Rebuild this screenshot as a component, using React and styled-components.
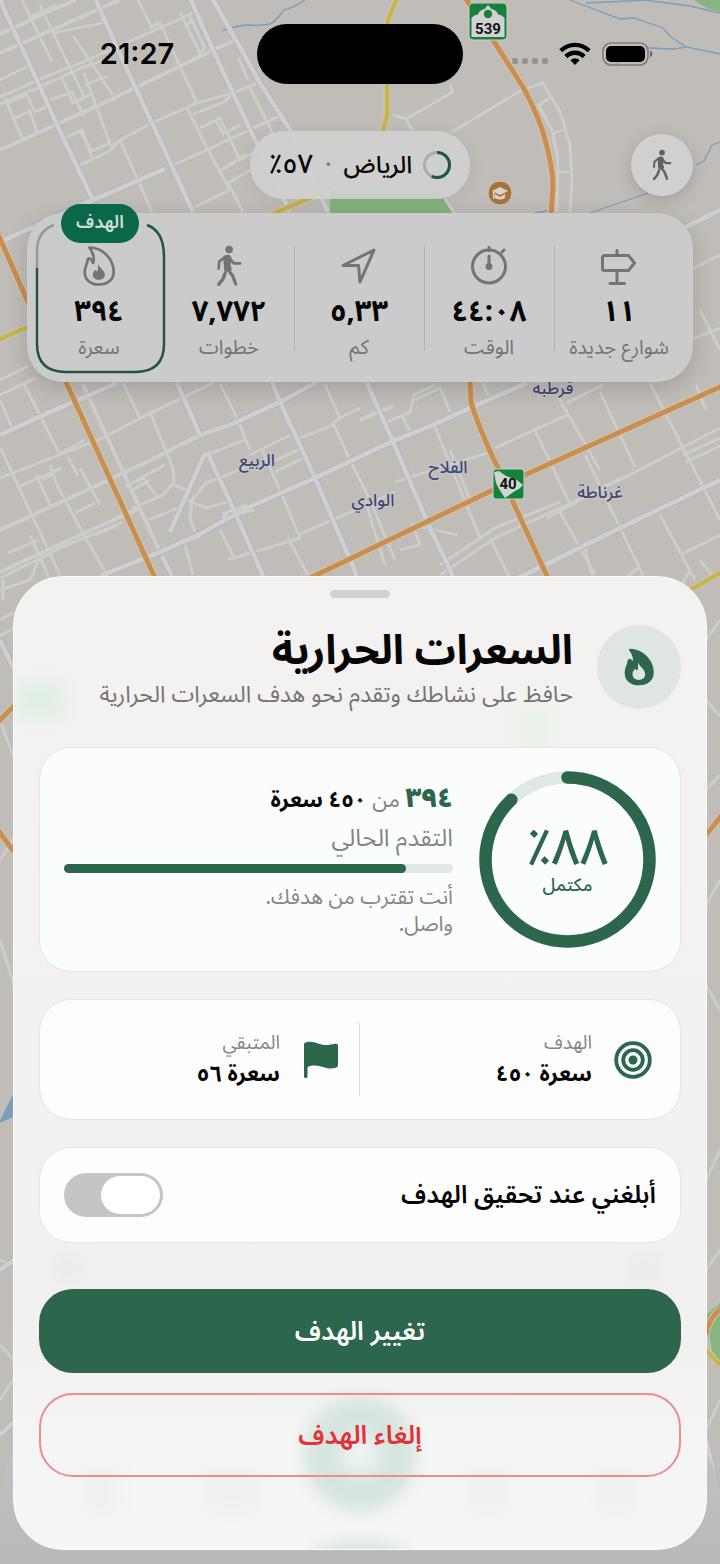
//style
import styled, { createGlobalStyle, css } from "styled-components";

const GlobalStyle = createGlobalStyle`
  * {
    box-sizing: border-box;
  }

  body {
    margin: 0;
    background: #c0bcb7;
    font-family: "Noto Sans Arabic", "Noto Sans", "DejaVu Sans", sans-serif;
  }

  h1,
  p,
  dl,
  dt,
  dd {
    margin: 0;
  }
`;

const green = "#2c674d";

//page
const Page = styled.main`
  position: relative;
  overflow: hidden;
  min-height: 100vh;
  padding-bottom: 13px;
  color: #050505;
`;

const MapCanvas = styled.svg`
  position: absolute;
  inset: 0;
  width: 100%;
  height: 100%;
`;

const Shade = styled.div`
  position: absolute;
  inset: auto 0 0;
  height: 142px;
  border-radius: 76px 76px 0 0;
  background: linear-gradient(#c3c3c3, #b9b9b9);
`;

//status bar
const StatusBar = styled.header`
  position: relative;
  direction: ltr;
  display: grid;
  grid-template-columns: 1fr 206px 1fr;
  align-items: center;
  padding-top: 23px;
`;

const Time = styled.time`
  padding-left: 17px;
  text-align: center;
  font: 600 29px/62px Inter, sans-serif;
`;

const Island = styled.div`
  height: 60px;
  border-radius: 30px;
  background: #000;
`;

const Signals = styled.div`
  display: flex;
  align-items: center;
  justify-content: center;
  gap: 11px;
  padding-right: 18px;
`;

//top row
const TopRow = styled.div`
  position: relative;
  display: grid;
  grid-template-columns: 1fr auto 1fr;
  align-items: center;
  margin-top: 46px;
  padding: 0 27px;
`;

const CityPill = styled.div`
  grid-column: 2;
  display: flex;
  align-items: center;
  gap: 11px;
  height: 68px;
  padding: 0 19px;
  border-radius: 34px;
  background: rgba(208, 208, 208, 0.92);
  box-shadow: 0 4px 20px rgba(0, 0, 0, 0.06);
  font-size: 24px;
  font-weight: 500;
  line-height: 36px;
`;

const Dot = styled.span`
  margin: 0 12px;
  color: #777;
`;

const Percent = styled.span`
  font-size: 27px;
`;

const RoundButton = styled.button`
  display: grid;
  place-items: center;
  width: 62px;
  height: 62px;
  padding: 0;
  border: 0;
  border-radius: 50%;
  background: #d0d0d0;
  color: #626262;
  box-shadow: 0 4px 16px rgba(0, 0, 0, 0.16);
`;

//stats
const StatsCard = styled.section`
  position: relative;
  display: grid;
  grid-template-columns: repeat(5, 1fr);
  margin: 14px 27px 0;
  padding: 10px 9px 9px 7px;
  border-radius: 36px;
  background: #cbcbcb;
  box-shadow: 0 6px 22px rgba(0, 0, 0, 0.16);
`;

const StatCell = styled.div`
  position: relative;
  display: flex;
  flex-direction: column;
  align-items: center;
  height: 150px;
  padding-top: 22px;
  color: #747474;

  ${({ $divided }) =>
    $divided &&
    css`
      &::after {
        content: "";
        position: absolute;
        left: 0;
        top: 23px;
        bottom: 22px;
        width: 1px;
        background: #b3b3b3;
      }
    `}
`;

const StatValue = styled.strong`
  color: #050505;
  font-size: 29px;
  font-weight: 700;
  line-height: 50px;
`;

const StatLabel = styled.span`
  font-size: 20px;
  line-height: 22px;
  white-space: nowrap;
`;

const GoalFrame = styled.svg`
  position: absolute;
  inset: 0;
  width: 100%;
  height: 100%;
  overflow: visible;
`;

const GoalBadge = styled.span`
  position: absolute;
  top: -19px;
  left: 50%;
  width: 78px;
  height: 39px;
  margin-left: -38px;
  border-radius: 20px;
  background: #086849;
  color: #d3dcd8;
  text-align: center;
  font-size: 18px;
  font-weight: 600;
  line-height: 36px;
`;

//sheet
const Sheet = styled.section`
  position: relative;
  overflow: hidden;
  display: flex;
  flex-direction: column;
  margin: 194px 13px 0;
  padding: 13px 25px 72px;
  border: 1px solid #fcfcfc;
  border-radius: 50px;
  background: linear-gradient(#f3f2f0, #f2f1f0 80%, #f5f5f5 90%);
`;

const Glow = styled.i`
  position: absolute;
  left: ${({ $left }) => $left};
  top: ${({ $top }) => $top}px;
  width: ${({ $size }) => $size}px;
  height: ${({ $tall, $size }) => $tall || $size}px;
  border-radius: ${({ $round }) => ($round ? "50%" : "4px")};
  background: ${({ $tint }) => $tint};
  filter: blur(8px);
`;

const Handle = styled.div`
  align-self: center;
  width: 60px;
  height: 8px;
  border-radius: 4px;
  background: #d3d2d1;
`;

const SheetHeader = styled.div`
  position: relative;
  display: flex;
  align-items: flex-start;
  gap: 24px;
  margin-top: 27px;
`;

const HeaderIcon = styled.div`
  flex: none;
  display: grid;
  place-items: center;
  width: 84px;
  height: 84px;
  border-radius: 50%;
  background: #dfe5e2;
  color: ${green};
`;

const Title = styled.h1`
  font-size: 41px;
  font-weight: 700;
  line-height: 52px;
`;

const Subtitle = styled.p`
  color: #747474;
  font-size: 23px;
  line-height: 36px;
  white-space: nowrap;
`;

const Card = styled.div`
  position: relative;
  display: flex;
  align-items: center;
  margin-top: ${({ $gap }) => $gap || 27}px;
  padding: 23px 24px;
  border: 1px solid #dfe8e4;
  border-radius: 32px;
  background: ${({ $mint }) => ($mint ? "#fafdfb" : "#fdfdfd")};
`;

const RingBox = styled.div`
  position: relative;
  flex: none;
  display: grid;
  place-content: center;
  width: 177px;
  height: 177px;
  margin-inline-end: 26px;
  color: ${green};
  text-align: center;
`;

const RingSvg = styled.svg`
  position: absolute;
  inset: 0;
`;

const RingValue = styled.strong`
  font-size: 50px;
  font-weight: 500;
  line-height: 50px;
`;

const RingLabel = styled.span`
  font-size: 18px;
  font-weight: 500;
  line-height: 24px;
`;

const Progress = styled.div`
  flex: 1;
  padding-bottom: 4px;
`;

const Amount = styled.p`
  font-size: 22px;
  font-weight: 700;
  line-height: 44px;

  b {
    color: ${green};
    font-size: 27px;
  }

  span {
    color: #858585;
    font-weight: 400;
  }
`;

const Muted = styled.p`
  color: #858585;
  font-size: 24px;
  line-height: 34px;
`;

const Message = styled.p`
  max-width: 220px;
  color: #858585;
  font-size: 21px;
  line-height: 27px;
`;

const Track = styled.div`
  direction: ltr;
  height: 9px;
  margin: 8px 0 11px;
  border-radius: 5px;
  background: #dfe8e4;
`;

const Fill = styled.div`
  height: 100%;
  border-radius: 5px;
  background: ${green};
`;

const Facts = styled.dl`
  flex: 1;
  display: grid;
  grid-template-columns: 1fr 1fr;
`;

const Fact = styled.div`
  display: grid;
  grid-template-columns: 46px 1fr;
  column-gap: 18px;
  align-content: center;
  height: 73px;
  color: ${green};

  & + & {
    padding-inline-start: 15px;
    border-inline-start: 1px solid #dcdcdc;
  }

  svg {
    grid-row: span 2;
    place-self: center;
  }

  dt {
    color: #858585;
    font-size: 19px;
    line-height: 28px;
  }

  dd {
    color: #050505;
    font-size: 22px;
    font-weight: 700;
    line-height: 34px;
  }
`;

const SwitchRow = styled.label`
  flex: 1;
  display: flex;
  align-items: center;
  justify-content: space-between;
  height: 48px;
  font-size: 25px;
  font-weight: 600;
`;

const Switch = styled.input`
  appearance: none;
  width: 99px;
  height: 44px;
  margin: 0;
  padding: 3px;
  border-radius: 22px;
  background: #c3c5c6;

  &::before {
    content: "";
    display: block;
    width: 59px;
    height: 38px;
    border-radius: 19px;
    background: #fff;
  }

  &:checked {
    background: ${green};
  }

  &:checked::before {
    margin-inline-start: 34px;
  }
`;

const Action = styled.button`
  position: relative;
  height: 84px;
  margin-top: ${({ $gap }) => $gap}px;
  border: ${({ $danger }) => ($danger ? "2px solid #ee8b8c" : "0")};
  border-radius: 34px;
  background: ${({ $danger }) => ($danger ? "transparent" : green)};
  color: ${({ $danger }) => ($danger ? "#e23338" : "#fff")};
  font-family: inherit;
  font-size: 26px;
  font-weight: 600;
`;

//icons
const Walk = ({ size = 42 }) => (
  <svg width={(size * 80) / 128} height={size} viewBox="0 0 80 128" fill="none" stroke="currentColor" strokeLinecap="round" strokeLinejoin="round">
    <circle cx="40" cy="14" r="11.5" fill="currentColor" stroke="none" />
    <path d="M24 36q18-10 21 5l-3 22 4 12-18 5Z" fill="currentColor" strokeWidth="5" />
    <path d="M26 38 10 50 8 72" strokeWidth="8" />
    <path d="m43 44 12 12h18" strokeWidth="9" />
    <path d="m35 74 15 18 10 27M28 86l-7 18L8 120" strokeWidth="10" />
  </svg>
);

const flameOuter =
  "M19 5C60 5 91 42 91 77c0 25-19 38-44 38S5 101 5 77c0-15 9-24 9-36l3-4c8 2 11 7 13 14C35 36 29 19 19 5Z";
const flameInner =
  "M46 54c2 13 19 18 19 32 0 9-8 15-18 15s-18-6-18-15c0-7 4-11 8-15 1 4 3 6 6 3 3-6 0-13 3-20Z";
const flameHole =
  "M46 46c2 14 21 20 21 37 0 11-9 18-20 18s-20-7-20-18c0-9 5-13 9-18 1 5 4 7 7 4 3-7 0-15 3-23Z";

const FlameLine = () => (
  <svg width="32" height="42" viewBox="0 0 95 120">
    <path d={flameOuter} fill="none" stroke="currentColor" strokeWidth="8" strokeLinejoin="round" />
    <path d={flameInner} fill="currentColor" />
  </svg>
);

const FlameSolid = () => (
  <svg width="32" height="38" viewBox="0 0 95 120">
    <path d={flameOuter} fill="currentColor" stroke="currentColor" strokeWidth="6" strokeLinejoin="round" />
    <path d={flameHole} fill="#dfe5e2" />
  </svg>
);

const LineIcon = ({ children }) => (
  <svg width="42" height="42" viewBox="0 0 42 42" fill="none" stroke="currentColor" strokeWidth="3" strokeLinecap="round" strokeLinejoin="round">
    {children}
  </svg>
);

const Signpost = () => (
  <LineIcon>
    <path d="M6.500 10.500h24l6 7.500-6 7.500h-24a2 2 0 0 1-2-2v-11a2 2 0 0 1 2-2ZM19 5.500v5M19 26v12M12 38.500h14.500" />
  </LineIcon>
);

const Stopwatch = () => (
  <LineIcon>
    <circle cx="21" cy="21.500" r="16.500" />
    <path d="M21 2.500v3M34 7l2-2M21 11v11" />
    <circle cx="21" cy="21.500" r="2" fill="currentColor" />
  </LineIcon>
);

const Arrow = () => (
  <LineIcon>
    <path d="M5 20.500 36 5 22 37l-1.500-16.500Z" />
  </LineIcon>
);

const Target = () => (
  <svg width="38" height="38" viewBox="0 0 38 38" fill="none" stroke="currentColor" strokeWidth="3.800">
    <circle cx="19" cy="19" r="16.800" />
    <circle cx="19" cy="19" r="9.800" />
    <circle cx="19" cy="19" r="4.500" fill="currentColor" stroke="none" />
  </svg>
);

const Flag = () => (
  <svg width="36" height="38" viewBox="0 0 36 38" fill="currentColor">
    <path d="M1 3.500C1 2 2 1.500 4 1c8-1.500 13 4 21 3 4-.5 6-1.200 8-1.200 1.400 0 2 .7 2 2V24c0 2-1 2.500-3 3-9 2-14-3.500-22-2.500-3 .3-5.500 1-5.500 2.500v8.500a1.700 1.700 0 0 1-3.500 0Z" />
  </svg>
);

const Wifi = () => (
  <svg width="32" height="24" viewBox="0 0 32 24" fill="none" stroke="#000" strokeWidth="4.400">
    <path d="M1.800 8.800a20 20 0 0 1 28.400 0M6.900 14.600a12.700 12.700 0 0 1 18.200 0" />
    <path d="m16 23-4.600-4.800a6.600 6.600 0 0 1 9.200 0Z" fill="#000" stroke="none" />
  </svg>
);

const Battery = () => (
  <svg width="51" height="24" viewBox="0 0 51 24">
    <rect x="1" y="1" width="45" height="22" rx="8" fill="none" stroke="#7d7b79" strokeWidth="1.600" />
    <rect x="4" y="4" width="39" height="16" rx="5" />
    <path d="M48 8.500q2.500 1 2.500 3.500t-2.500 3.500Z" fill="#6d6b69" />
  </svg>
);

const Dots = () => (
  <svg width="36" height="24" viewBox="0 0 36 24" fill="#95928f">
    {[0, 10, 20, 30].map((x) => (
      <rect key={x} x={x} y="16" width="6" height="6" rx="2" />
    ))}
  </svg>
);

const MiniRing = () => (
  <svg width="28" height="28" viewBox="0 0 28 28" fill="none" strokeWidth="3">
    <circle cx="14" cy="14" r="12.500" stroke="#abadac" />
    <circle cx="14" cy="14" r="12.500" stroke="#1f5641" pathLength="100" strokeDasharray="57 43" transform="rotate(-90 14 14)" />
  </svg>
);

//map
const lanes = [
  "M0 53 97 10 120 0M0 150 93 108 135 88 213 50 236 40",
  "M0 34 50 11 76 0M0 530 70 498 147 462 200 435 230 425",
  "M0 572 87 532 140 508M83 385 160 552M360 420 393 406",
];

const streets = [
  "M0 97 40 79 83 62 160 28 195 12M0 104 44 85 86 66M80 165 110 151 120 140 152 123 197 103 233 93 260 82",
  "M173 165 207 150 253 128 278 117M193 208 230 190M138 0 152 28 160 23 197 103M152 28 157 22",
  "M0 80 28 66M5 98 22 138M22 0 52 62M40 5 53 33 107 22M53 33 85 98M73 36 113 95M32 16 57 5",
  "M50 100 72 92 84 116M62 78 73 103 92 94M84 73 111 146 120 141M80 132 92 151 110 143M67 137 82 130 92 158",
  "M80 68 105 60M85 85 108 76M120 140 152 212M7 103 27 95 35 112 50 105M15 118 30 111 37 132",
  "M187 108 208 150 230 190M193 114 222 103 232 95M200 128 220 118 240 160 258 150M216 120 223 134 240 125M218 172 246 155M228 183 243 212M228 183 254 168M238 57 248 80M250 88 275 138M180 12 200 53 205 48 189 15M187 24 195 20",
  "M450 85 453 92 406 119 393 115M406 119 412 130M452 132 522 90 543 83 560 112 570 145 572 180 570 212M537 106 550 98M552 134 563 130M556 172 569 172M538 104 552 130 558 160 557 212",
  "M445 199 460 222M655 215 693 300M690 270 720 255M700 310 720 350M690 340 720 328",
  "M0 380 28 366M0 395 35 378M23 382 60 455M0 400 12 428M123 383 140 418 150 412 173 468 174 482 163 495 133 508M0 478 103 438 145 416 213 383",
  "M0 578 67 545 123 522M0 447 60 575M68 457 78 476M50 465 57 485 80 528 110 580M58 455 85 440M20 486 62 468M36 474 50 505M80 468 100 505M75 513 95 503M42 480 52 475M30 535 50 580M8 553 38 540M0 590 30 580 42 552M95 535 118 525",
  "M173 485 187 490M187 500 206 508 227 502M250 465 220 478 207 482 192 500 190 518 195 532M125 487 165 465M137 482 143 478 158 498M133 490 150 480M148 520 178 508M207 455 244 440M220 384 238 420 250 450M270 463 302 448M275 472 303 458M250 455 290 435",
  "M283 497 300 538 227 560M283 497 262 450M300 534 360 508 395 492M288 538 308 575M220 530 235 560M185 545 193 575M325 385 340 418 333 423 350 460 370 500 395 560M333 425 295 440M340 418 360 408",
  "M387 422 410 412 414 395 435 385M402 415 410 432M415 400 440 388 450 412M483 383 488 395M435 427 480 538M395 482 490 452M495 448 567 415M535 430 569 502M557 395 600 470M567 403 603 385M600 392 635 467M650 383 720 520",
  "M400 550 420 545 413 525 458 535M440 575 495 538 560 508 620 480 720 428M490 538 510 578M440 565 495 528 560 502M547 518 620 478M560 512 595 575M585 455 650 590M683 455 720 438M686 462 720 446M660 515 695 580M680 555 720 535M520 578 555 562M625 578 640 567M365 500 385 565M450 450 470 500M696 385 706 410M585 548 592 575M700 560 712 575M680 588 690 570",
  "M0 620 14 612M0 636 14 628M0 720 14 758M0 860 14 838M0 940 14 985M706 640 720 620M706 700 720 716M706 790 720 775M706 905 720 880M706 985 720 1010M706 1180 720 1150M706 1270 720 1250M0 1260 14 1265M0 1345 14 1360M0 1400 14 1378M706 1430 720 1400M3 600 3 580",
];

const highways = [
  "M0-2 3 7 40 87 57 125 93 200M97 3 135 87 152 123 193 212M96 0 97 3M190-2 213 50 233 93 262 155 290 212M212-2 236 40 260 83 290 130 328 212",
  "M165 169 93 200 0 242M0 435 50 412 117 383M177 383 200 435M272 382 280 402 315 478 357 576M207 452 233 508 263 576M205 453 170 532",
  "M100 576 160 552 200 534 247 508 315 478 393 441 433 425 470 408 527 383M230 425 280 402 317 382M162 556 172 576M367 383 393 442 430 528 453 576",
  "M510 582 620 528 720 480M680 230 720 210M0 640 14 670M0 1435 14 1422M706 1440 720 1500M0 1270 14 1260",
];

const orange =
  "M464-4 493 40 523 87Q540 118 546 143 553 170 553 185L550 230 490 330Q470 360 470 382L471 402Q476 420 493 458L507 485 513 502 548 578M310 578 493 490 527 474 722 386M-2 234 27 300 66 382 155 578M-2 722 14 706M-2 830l16 22M706 835l16-20M706 1335q2-15 14-26";
const gold = "M398-4 388 20 387 60 387 117 380 140Q360 175 310 198L272 214 27 327-4 341M690 590l32-18M706 1350l14 15";

const CityMap = () => (
  <MapCanvas viewBox="0 0 720 1564" preserveAspectRatio="xMidYMin slice" fill="none" aria-hidden="true">
    <path d="M330 190h109l18 30H330ZM694 0h26v12q-14-3-26-12ZM706 1315l14-12v60l-8-12Z" fill="#86b57f" />
    <g stroke="#789fbd" strokeWidth="1.300">
      <path d="M222 31q12-5 25-6 14 1 23-1 6-3 14-14 12-3 22-11M570 0l50 19 14-1 29 10 8 9 15 10 34 7M686 47l-12 2-26-1M645 0l45 6 30 7M648 0l-62 3M696 165l8-4 8-16 8-3M590 213l58-20M535 213l12-2M616 66l4-6" />
      <path d="M0 1122l14-28v22Z" fill="#789fbd" />
    </g>
    <g stroke="#cecdcb" strokeWidth="2.800">
      {streets.map((d) => (
        <path key={d} d={d} />
      ))}
    </g>
    <g stroke="#cecdcb" strokeWidth="4">
      {lanes.map((d) => (
        <path key={d} d={d} />
      ))}
    </g>
    <g strokeLinejoin="round">
      {highways.map((d) => (
        <path key={d} d={d} stroke="#abadb9" strokeWidth="6" />
      ))}
      {highways.map((d) => (
        <path key={d} d={d} stroke="#cecfd1" strokeWidth="4.800" />
      ))}
      <path d="m223 514 24-9M222 518l5-3M210 527l30-14 14-3M150 557l30-14 20-7" stroke="#cecfd1" strokeWidth="3" />
    </g>
    <g strokeLinejoin="round">
      <path d={gold} stroke="#cfc9b4" strokeWidth="6.500" />
      <path d={gold} stroke="#c6b44f" strokeWidth="4.500" />
      <path d={orange} stroke="#d3c4b2" strokeWidth="7" />
      <path d={orange} stroke="#c88f4f" strokeWidth="5" />
    </g>
    <g>
      <rect x="469" y="3" width="38" height="37" rx="4" fill="#16803c" stroke="#c8d2c9" />
      <path d="M471.500 37V18q4-4 6-3 2-5 7-6l3.500-4 3.500 4q5 1 7 6 2-1 6 3v19Z" fill="#d2d2d2" />
      <circle cx="488" cy="14" r="4.200" fill="#16803c" />
      <rect x="493" y="469" width="31" height="30" rx="3" fill="#158239" stroke="#c8d2c9" />
      <path d="m494 472 5-1 7 5 11 4 6 5-4 4-4 2-10 7-6-9-3-6Z" fill="#cfd5cf" />
    </g>
    <g fill="#111" fontFamily="Roboto, sans-serif" fontWeight="700" textAnchor="middle">
      <text x="488" y="34" fontSize="15">
        539
      </text>
      <text x="508" y="489" fontSize="15">
        40
      </text>
    </g>
    <circle cx="500" cy="193" r="12" fill="#a87339" stroke="#cfc6ba" />
    <path d="m492 191 8-4 8 4-8 4ZM495 194v4q5 3 10 0v-4l-5 3ZM493 192h1.500v7H493Z" fill="#d8d3cc" />
    <g
      direction="rtl"
      fill="#3d4674"
      stroke="#c9c8c7"
      strokeWidth="2"
      paintOrder="stroke"
      fontSize="17"
      fontWeight="500"
      textAnchor="middle"
    >
      <text x="553" y="394">
        قرطبة
      </text>
      <text x="257" y="466">
        الربيع
      </text>
      <text x="448" y="473">
        الفلاح
      </text>
      <text x="373" y="506">
        الوادي
      </text>
      <text x="600" y="498">
        غرناطة
      </text>
    </g>
  </MapCanvas>
);

const stats = [
  { icon: <Signpost />, value: "١١", label: "شوارع جديدة", divided: true },
  { icon: <Stopwatch />, value: "٤٤:٠٨", label: "الوقت", divided: true },
  { icon: <Arrow />, value: "٥,٣٣", label: "كم", divided: true },
  { icon: <Walk />, value: "٧,٧٧٢", label: "خطوات" },
  { icon: <FlameLine />, value: "٣٩٤", label: "سعرة", goal: true },
];

const Stat = ({ icon, value, label, divided, goal }) => (
  <StatCell $divided={divided}>
    {goal && (
      <>
        <GoalFrame viewBox="0 0 130 150" preserveAspectRatio="none" fill="none" strokeWidth="2.500">
          <path d="M20 2Q3 8 3 28V46" stroke="#989898" />
          <path d="M3 45V121Q3 149 32 149H101Q130 149 130 121V34Q130 8 113 2" stroke="#235443" />
        </GoalFrame>
        <GoalBadge>الهدف</GoalBadge>
      </>
    )}
    {icon}
    <StatValue>{value}</StatValue>
    <StatLabel>{label}</StatLabel>
  </StatCell>
);

const Ring = ({ percent }) => (
  <RingSvg viewBox="0 0 177 177" fill="none" strokeWidth="12.500">
    <circle cx="88.500" cy="88.500" r="82" stroke="#dfe9e4" />
    <circle
      cx="88.500"
      cy="88.500"
      r="82"
      stroke={green}
      strokeLinecap="round"
      pathLength="100"
      strokeDasharray={`${percent} 100`}
      transform="rotate(-90 88.500 88.500)"
    />
  </RingSvg>
);

export default function App() {
  const percent = 88;

  return (
    <Page dir="rtl" lang="ar">
      <GlobalStyle />
      <CityMap />
      <Shade />

      <StatusBar>
        <Time>21:27</Time>
        <Island />
        <Signals>
          <Dots />
          <Wifi />
          <Battery />
        </Signals>
      </StatusBar>

      <TopRow>
        <RoundButton aria-label="مشي">
          <Walk size={32} />
        </RoundButton>
        <CityPill>
          <MiniRing />
          <span>
            الرياض<Dot>·</Dot>
            <Percent>٥٧٪</Percent>
          </span>
        </CityPill>
      </TopRow>

      <StatsCard>
        {stats.map((stat) => (
          <Stat key={stat.label} {...stat} />
        ))}
      </StatsCard>

      <Sheet>
        <Glow $left="4px" $top={106} $size={46} $tall={34} $tint="#dfefe4" />
        <Glow $left="505px" $top={130} $size={30} $tall={50} $tint="#e9f2e8" />
        <Glow $left="calc(50% - 56px)" $top={820} $size={112} $tall={114} $round $tint="radial-gradient(#f3f5f4 8%, #d5e4de 38%)" />
        <Glow $left="calc(50% - 48px)" $top={966} $size={96} $tall={30} $round $tint="#cfe2da" />
        <Glow $left="70px" $top={890} $size={36} $tall={46} $tint="#f0f0f0" />
        <Glow $left="190px" $top={890} $size={54} $tall={46} $tint="#f0f0f0" />
        <Glow $left="454px" $top={890} $size={40} $tall={46} $tint="#f0f0f0" />
        <Glow $left="580px" $top={890} $size={40} $tall={46} $tint="#f0f0f0" />
        <Glow $left="40px" $top={676} $size={30} $tint="#ececeb" />
        <Glow $left="614px" $top={676} $size={34} $tint="#ececeb" />

        <Handle />
        <SheetHeader>
          <HeaderIcon>
            <FlameSolid />
          </HeaderIcon>
          <div>
            <Title>السعرات الحرارية</Title>
            <Subtitle>حافظ على نشاطك وتقدم نحو هدف السعرات الحرارية</Subtitle>
          </div>
        </SheetHeader>

        <Card $mint $gap={34}>
          <RingBox>
            <Ring percent={percent} />
            <RingValue>٨٨٪</RingValue>
            <RingLabel>مكتمل</RingLabel>
          </RingBox>
          <Progress>
            <Amount>
              <b>٣٩٤</b> <span>من</span> ٤٥٠ سعرة
            </Amount>
            <Muted>التقدم الحالي</Muted>
            <Track role="progressbar" aria-label="التقدم الحالي" aria-valuenow={percent}>
              <Fill style={{ width: `${percent}%` }} />
            </Track>
            <Message>أنت تقترب من هدفك. واصل.</Message>
          </Progress>
        </Card>

        <Card>
          <Facts>
            <Fact>
              <Target />
              <dt>الهدف</dt>
              <dd>سعرة ٤٥٠</dd>
            </Fact>
            <Fact>
              <Flag />
              <dt>المتبقي</dt>
              <dd>سعرة ٥٦</dd>
            </Fact>
          </Facts>
        </Card>

        <Card>
          <SwitchRow>
            أبلغني عند تحقيق الهدف
            <Switch type="checkbox" role="switch" />
          </SwitchRow>
        </Card>

        <Action $gap={46}>تغيير الهدف</Action>
        <Action $danger $gap={20}>
          إلغاء الهدف
        </Action>
      </Sheet>
    </Page>
  );
}
